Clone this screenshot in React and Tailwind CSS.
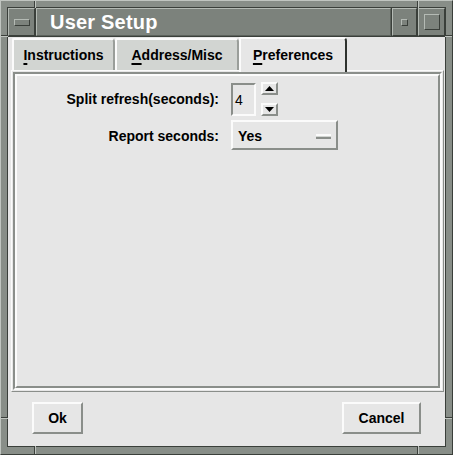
const raised = "border-t-2 border-l-2 border-b-2 border-r-2 border-t-[#fbfbfb] border-l-[#fbfbfb] border-b-[#8a8e8a] border-r-[#8a8e8a]";

const Notch = ({ className }) => (
  <div className={"absolute " + className} />
);

const Tab = ({ label, width, selected }) => (
  <div
    className={
      "relative flex items-center justify-center border-l-2 border-t-2 border-l-[#fbfbfb] border-t-[#fbfbfb] rounded-tr-[4px] rounded-tl-[2px] " +
      (selected
        ? "z-10 h-[35px] -mb-[2px] bg-[#e6e6e6] border-r-2 border-r-[#2e322e] pb-[1px]"
        : "h-[32px] bg-[#d2d5d2] border-r-2 border-r-[#9a9e9a]")
    }
    style={{ width }}
  >
    <span className="text-[14px] font-bold text-black">
      <span className="underline decoration-2 underline-offset-[3px]">{label[0]}</span>
      {label.slice(1)}
    </span>
  </div>
);

export default function App() {
  return (
    <div className="relative w-[453px] h-[455px] bg-[#888e88] border border-t-[#c0c5c0] border-l-[#c0c5c0] border-b-[#3a3f3a] border-r-[#3a3f3a] pt-[6px] pl-[6px] pr-[6px] pb-[7px] font-['Liberation_Sans',Arial,sans-serif]">
      {/* resize corner notches */}
      <Notch className="left-[33px] top-0 w-[1px] h-[7px] bg-[#3a3f3a]" />
      <Notch className="left-[34px] top-0 w-[1px] h-[7px] bg-[#c0c5c0]" />
      <Notch className="left-[416px] top-0 w-[1px] h-[7px] bg-[#3a3f3a]" />
      <Notch className="left-[417px] top-0 w-[1px] h-[7px] bg-[#c0c5c0]" />
      <Notch className="left-[33px] bottom-0 w-[1px] h-[8px] bg-[#3a3f3a]" />
      <Notch className="left-[34px] bottom-0 w-[1px] h-[8px] bg-[#c0c5c0]" />
      <Notch className="left-[416px] bottom-0 w-[1px] h-[8px] bg-[#3a3f3a]" />
      <Notch className="left-[417px] bottom-0 w-[1px] h-[8px] bg-[#c0c5c0]" />
      <Notch className="left-0 top-[34px] w-[7px] h-[1px] bg-[#3a3f3a]" />
      <Notch className="left-0 top-[35px] w-[7px] h-[1px] bg-[#c0c5c0]" />
      <Notch className="right-0 top-[34px] w-[7px] h-[1px] bg-[#3a3f3a]" />
      <Notch className="right-0 top-[35px] w-[7px] h-[1px] bg-[#c0c5c0]" />
      <Notch className="left-0 top-[416px] w-[7px] h-[1px] bg-[#3a3f3a]" />
      <Notch className="left-0 top-[417px] w-[7px] h-[1px] bg-[#c0c5c0]" />
      <Notch className="right-0 top-[416px] w-[7px] h-[1px] bg-[#3a3f3a]" />
      <Notch className="right-0 top-[417px] w-[7px] h-[1px] bg-[#c0c5c0]" />

      <div className="flex h-full flex-col border border-[#3a3f3a]">
        {/* title bar */}
        <div className="flex h-[29px] border-b border-[#3a3f3a] bg-[#3a3f3a] gap-[1px]">
          <div className="flex w-[27px] items-center justify-center bg-[#7c827c] border border-t-[#b4bab4] border-l-[#b4bab4] border-b-[#3a3f3a] border-r-[#3a3f3a]">
            <div className="w-[16px] h-[7px] border border-t-[#b4bab4] border-l-[#b4bab4] border-b-[#3a3f3a] border-r-[#3a3f3a]" />
          </div>
          <div className="flex flex-1 items-center bg-[#7c827c] border border-t-[#b4bab4] border-l-[#b4bab4] border-b-[#5c625c] border-r-[#5c625c] pl-[13px]">
            <span className="text-[20px] font-bold leading-none text-white tracking-[0.2px]">User Setup</span>
          </div>
          <div className="flex w-[25px] items-center justify-center bg-[#7c827c] border border-t-[#b4bab4] border-l-[#b4bab4] border-b-[#3a3f3a] border-r-[#3a3f3a]">
            <div className="w-[7px] h-[7px] border border-t-[#b4bab4] border-l-[#b4bab4] border-b-[#3a3f3a] border-r-[#3a3f3a]" />
          </div>
          <div className="flex w-[27px] items-center justify-center bg-[#7c827c] border border-t-[#b4bab4] border-l-[#b4bab4] border-b-[#3a3f3a] border-r-[#3a3f3a]">
            <div className="w-[16px] h-[16px] border border-t-[#b4bab4] border-l-[#b4bab4] border-b-[#3a3f3a] border-r-[#3a3f3a]" />
          </div>
        </div>

        {/* client area */}
        <div className="flex flex-1 flex-col bg-[#e6e6e6] pl-[3px] pr-[1px]">
          <div className="flex h-[33px] items-end pl-[1px]">
            <Tab label="Instructions" width={103} />
            <Tab label="Address/Misc" width={124} />
            <Tab label="Preferences" width={108} selected />
          </div>

          <div className="h-[322px] border border-t-[#fbfbfb] border-l-[#fbfbfb] border-b-[#8a8e8a] border-r-[#8a8e8a] p-[1px]">
            <div className="h-full border-2 border-t-[#8a8e8a] border-l-[#8a8e8a] border-b-[#fbfbfb] border-r-[#fbfbfb]">
              <div className="h-full border-2 border-t-[#fbfbfb] border-l-[#fbfbfb] border-b-[#8a8e8a] border-r-[#8a8e8a] pt-[6px] text-[14px] text-black">
                <div className="flex h-[34px] items-center">
                  <div className="w-[202px] text-right font-bold">Split refresh(seconds):</div>
                  <div className="ml-[12px] flex h-[33px] w-[25px] items-center border-2 border-t-[#8a8e8a] border-l-[#8a8e8a] border-b-[#fbfbfb] border-r-[#fbfbfb] pl-[2px] pt-[2px]">
                    4
                  </div>
                  <div className="ml-[5px] flex h-[34px] flex-col justify-between">
                    <div className={"flex h-[13px] w-[17px] items-center justify-center bg-[#e6e6e6] " + raised}>
                      <svg width="9" height="5" viewBox="0 0 9 5"><path d="M4.5 0L9 5H0z" fill="#000" /></svg>
                    </div>
                    <div className={"flex h-[13px] w-[17px] items-center justify-center bg-[#e6e6e6] " + raised}>
                      <svg width="9" height="5" viewBox="0 0 9 5"><path d="M0 0H9L4.5 5z" fill="#000" /></svg>
                    </div>
                  </div>
                </div>

                <div className="mt-[4px] flex h-[30px] items-center">
                  <div className="w-[202px] pt-[3px] text-right font-bold">Report seconds:</div>
                  <div className={"ml-[12px] flex h-[30px] w-[107px] items-center justify-between pl-[5px] pr-[5px] pt-[3px] " + raised}>
                    <span className="font-bold">Yes</span>
                    <div className="h-[5px] w-[15px] border-t-2 border-b-2 border-t-[#fbfbfb] border-b-[#8a8e8a] bg-[#d2d5d2]" />
                  </div>
                </div>
              </div>
            </div>
          </div>

          <div className="flex flex-1 items-start justify-between pl-[21px] pr-[23px] pt-[10px]">
            <button className={"flex h-[32px] w-[51px] items-center justify-center text-[14px] font-bold text-black " + raised}>
              Ok
            </button>
            <button className={"flex h-[32px] w-[79px] items-center justify-center text-[14px] font-bold text-black " + raised}>
              Cancel
            </button>
          </div>
        </div>
      </div>
    </div>
  );
}
